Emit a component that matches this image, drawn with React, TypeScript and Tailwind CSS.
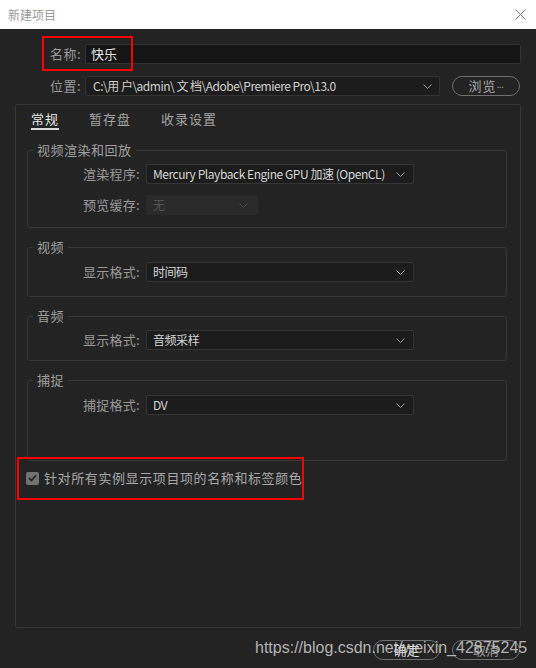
import type { ReactNode } from "react";

const Chevron = () => (
  <svg width="9" height="5" viewBox="0 0 9 5" className="shrink-0">
    <path d="M0.5 0.5 L4.5 4.5 L8.5 0.5" stroke="#a0a0a0" strokeWidth="1" fill="none" />
  </svg>
);

const Select = ({
  className,
  children,
  disabled,
}: {
  className: string;
  children: ReactNode;
  disabled?: boolean;
}) => (
  <div
    className={
      disabled
        ? `flex items-center justify-between h-[20px] rounded-[2px] bg-[#2a2a2a] pl-[7px] pr-[10px] text-[#555] ${className}`
        : `flex items-center justify-between h-[20px] rounded-[2px] border border-[#353535] bg-[#1c1c1c] pl-[6px] pr-[8px] text-[#d6d6d6] ${className}`
    }
  >
    <span className="whitespace-nowrap text-[12px] leading-[16px] tracking-[-0.45px]">{children}</span>
    {disabled ? (
      <svg width="9" height="5" viewBox="0 0 9 5" className="shrink-0">
        <path d="M0.5 0.5 L4.5 4.5 L8.5 0.5" stroke="#4a4a4a" strokeWidth="1" fill="none" />
      </svg>
    ) : (
      <Chevron />
    )}
  </div>
);

const Row = ({ label, children }: { label: string; children: ReactNode }) => (
  <div className="flex items-center h-[20px]">
    <span className="w-[112px] text-right text-[13px] leading-[16px] text-[#9a9a9a] tracking-[0.3px]">{label}</span>
    <div className="ml-[6px]">{children}</div>
  </div>
);

const Group = ({ title, className, children }: { title: string; className: string; children: ReactNode }) => (
  <fieldset className={`border border-[#383838] rounded-[3px] ${className}`}>
    <legend className="ml-[5px] px-[4px] text-[13px] leading-[16px] h-[16px] text-[#a0a0a0] tracking-[0.5px]">{title}</legend>
    {children}
  </fieldset>
);

export default function App() {
  return (
    <div className="relative w-[536px] h-[668px] flex flex-col bg-[#232323] font-['Noto_Sans_CJK_SC',sans-serif] overflow-hidden">
      {/* title bar */}
      <div className="h-[29px] bg-white flex items-center justify-between pl-[8px] pr-[10px]">
        <span className="text-[12px] leading-[16px] text-[#9a9a9a]">新建项目</span>
        <svg width="11" height="11" viewBox="0 0 11 11">
          <path d="M0.5 0.5 L10.5 10.5 M10.5 0.5 L0.5 10.5" stroke="#777" strokeWidth="1" />
        </svg>
      </div>

      <div className="flex-1 flex flex-col px-[15px] pt-[15px]">
        <div className="flex items-center h-[19px]">
          <span className="w-[66px] text-right text-[13px] leading-[16px] text-[#9a9a9a] tracking-[0.5px]">名称:</span>
          <div className="ml-[4px] flex-1 h-[20px] rounded-[2px] border border-[#333] bg-[#151515] pl-[5px] flex items-center text-[13px] leading-[16px] text-[#e4e4e4]">
            快乐
          </div>
        </div>

        <div className="flex items-center h-[20px] mt-[13px]">
          <span className="w-[66px] text-right text-[13px] leading-[16px] text-[#9a9a9a] tracking-[0.5px]">位置:</span>
          <div className="ml-[4px] w-[355px] h-[20px] rounded-[2px] border border-[#333] bg-[#1c1c1c] pl-[7px] pr-[7px] flex items-center justify-between">
            <span className="whitespace-nowrap text-[12px] leading-[16px] tracking-[-0.5px] text-[#d0d0d0]">
              C:\用 户\admin\ 文 档\Adobe\Premiere Pro\13.0
            </span>
            <Chevron />
          </div>
          <div className="ml-[12px] w-[68px] h-[20px] rounded-full border border-[#6f6f6f] flex items-center justify-center text-[13px] leading-[16px] text-[#a8a8a8] tracking-[1px]">
            浏览<span className="font-['Liberation_Sans',sans-serif] text-[10px] tracking-[-0.5px] self-end pb-[2px]">...</span>
          </div>
        </div>

        {/* main panel */}
        <div className="mt-[8px] h-[524px] border border-[#363636] rounded-[2px] flex flex-col px-[10px] pt-[6px]">
          <div className="flex gap-[30px] pl-[5px] text-[13px] leading-[16px] tracking-[1px]">
            <span className="text-[#e6e6e6] pb-[1px] border-b-2 border-[#d8d8d8]">常规</span>
            <span className="text-[#a4a4a4]">暂存盘</span>
            <span className="text-[#a4a4a4]">收录设置</span>
          </div>

          <div className="mt-[12px] flex flex-col gap-[11px] pl-[1px] pr-[3px]">
            <Group title="视频渲染和回放" className="pt-[6px] pb-[12px]">
              <div className="flex flex-col gap-[11px]">
                <Row label="渲染程序:">
                  <Select className="w-[268px]">Mercury Playback Engine GPU 加速 (OpenCL)</Select>
                </Row>
                <Row label="预览缓存:">
                  <Select className="w-[112px]" disabled>
                    无
                  </Select>
                </Row>
              </div>
            </Group>

            <Group title="视频" className="pt-[7px] pb-[14px]">
              <Row label="显示格式:">
                <Select className="w-[268px]">时间码</Select>
              </Row>
            </Group>

            <Group title="音频" className="pt-[6px] pb-[10px]">
              <Row label="显示格式:">
                <Select className="w-[268px]">音频采样</Select>
              </Row>
            </Group>

            <Group title="捕捉" className="pt-[7px] pb-[45px]">
              <Row label="捕捉格式:">
                <Select className="w-[268px]">DV</Select>
              </Row>
            </Group>
          </div>

          <div className="mt-[9px] flex items-center">
            <div className="w-[13px] h-[13px] rounded-[2px] bg-[#727272] flex items-center justify-center">
              <svg width="9" height="8" viewBox="0 0 9 8">
                <path d="M1 4 L3.5 6.5 L8 1.2" stroke="#262626" strokeWidth="1.8" fill="none" />
              </svg>
            </div>
            <span className="ml-[5px] text-[13px] leading-[16px] text-[#a8a8a8] tracking-[0.6px]">
              针对所有实例显示项目项的名称和标签颜色
            </span>
          </div>
        </div>

        <div className="mt-[12px] flex justify-end gap-[12px] pr-[1px]">
          <div className="w-[67px] h-[20px] rounded-full border border-[#6f6f6f] flex items-center justify-center text-[13px] leading-[16px] text-[#e0e0e0]">
            确定
          </div>
          <div className="w-[68px] h-[20px] rounded-full border border-[#6f6f6f] flex items-center justify-center text-[13px] leading-[16px] text-[#9a9a9a]">
            取消
          </div>
        </div>
      </div>

      {/* annotation boxes */}
      <div className="absolute left-[42px] top-[36px] w-[91px] h-[35px] border-2 border-[#ff0000]" />
      <div className="absolute left-[17px] top-[457px] w-[287px] h-[43px] border-2 border-[#ff0000]" />

      {/* watermark */}
      <div className="absolute left-[255px] top-[639px] font-['Liberation_Sans',sans-serif] text-[16px] leading-[18px] text-[#d0d0d0]/85">
        https://blog.csdn.net/weixin_42875245
      </div>
    </div>
  );
}
